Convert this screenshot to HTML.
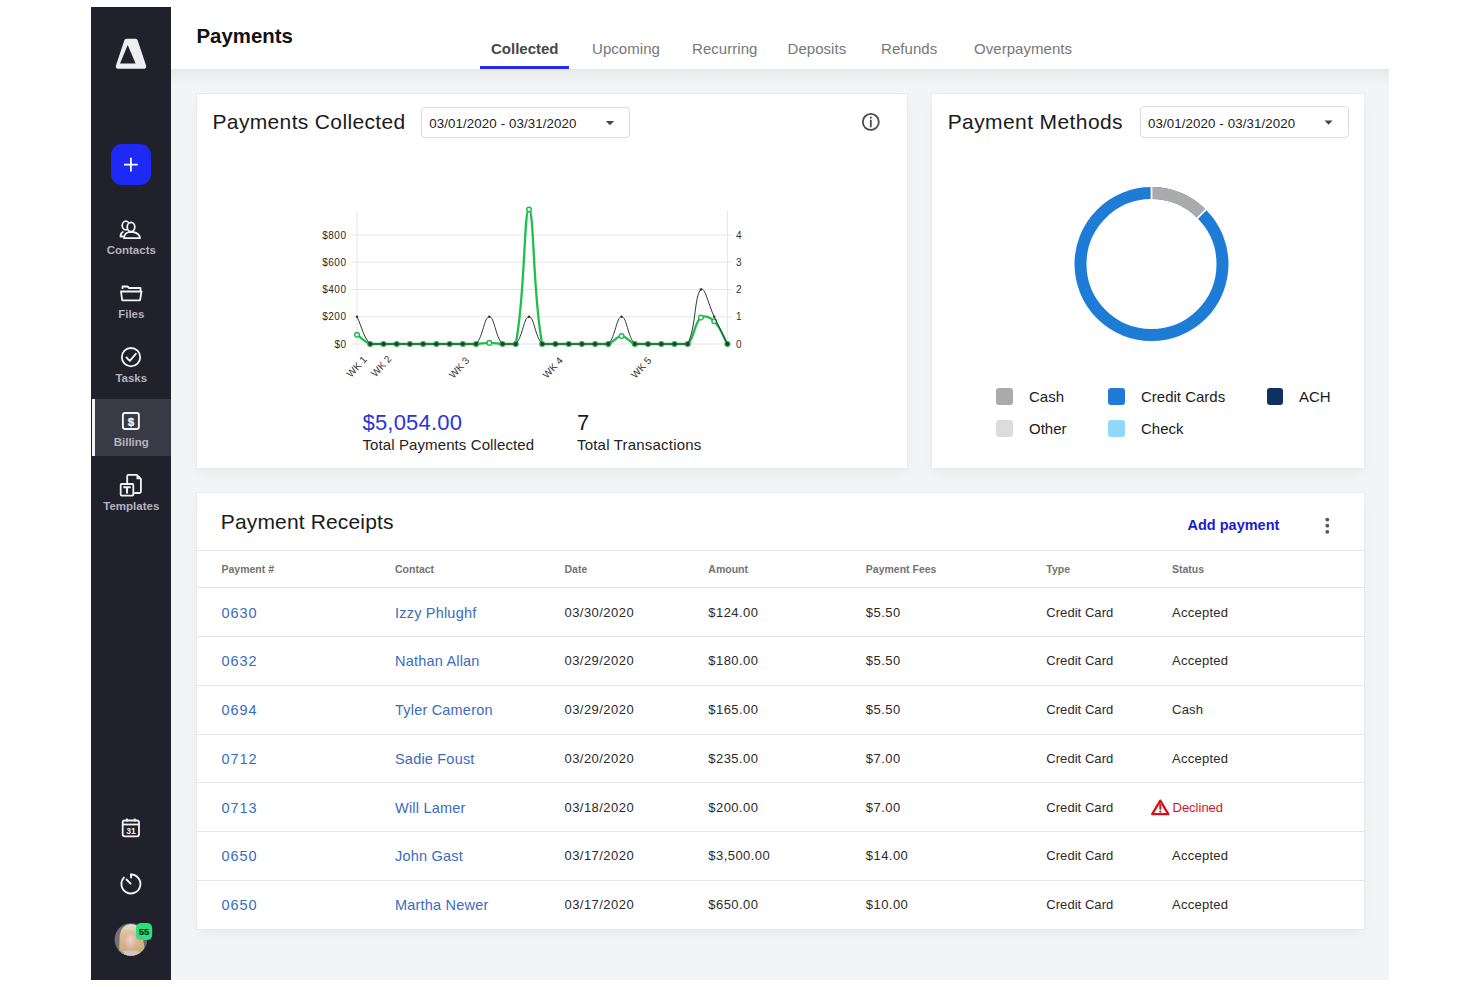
<!DOCTYPE html><html><head><meta charset="utf-8"><style>
*{margin:0;padding:0;box-sizing:border-box}
html,body{width:1480px;height:987px;overflow:hidden;background:#fff;font-family:"Liberation Sans",sans-serif}
.t{position:absolute;white-space:nowrap}
.r{position:absolute}
svg{position:absolute;left:0;top:0}
</style></head><body><div class="r" style="left:91px;top:7px;width:80px;height:973px;background:#20212b"></div>
<div class="r" style="left:171px;top:7px;width:1218px;height:62px;background:#fff"></div>
<div class="r" style="left:171px;top:69px;width:1218px;height:911px;background:#f3f4f6"></div>
<div class="r" style="left:171px;top:69px;width:1218px;height:17px;background:linear-gradient(rgba(0,0,0,0.05),rgba(0,0,0,0.025) 40%,rgba(0,0,0,0))"></div>
<div class="r" style="left:92px;top:399px;width:79px;height:57px;background:#393a45"></div>
<div class="r" style="left:92px;top:399px;width:3px;height:57px;background:#f2f2f5"></div>
<div class="r" style="left:111px;top:144px;width:40px;height:41px;background:#1f29f5;border-radius:11px"></div>
<div class="r" style="left:196px;top:93px;width:712px;height:376px;background:#fff;border:1px solid #e9eaed;box-shadow:0 5px 12px -3px rgba(0,0,0,0.06)"></div>
<div class="r" style="left:931px;top:93px;width:434px;height:376px;background:#fff;border:1px solid #e9eaed;box-shadow:0 5px 12px -3px rgba(0,0,0,0.06)"></div>
<div class="r" style="left:196px;top:492px;width:1169px;height:438px;background:#fff;border:1px solid #e9eaed;box-shadow:0 5px 12px -3px rgba(0,0,0,0.06)"></div>
<div class="r" style="left:421px;top:107px;width:209px;height:31px;border:1px solid #dcdcdc;border-radius:4px;background:#fff"></div>
<div class="r" style="left:1140px;top:106px;width:209px;height:32px;border:1px solid #dcdcdc;border-radius:4px;background:#fff"></div>
<div class="t " style="left:196.5px;top:26.23px;font-size:20.4px;line-height:20.4px;color:#111;font-weight:700;letter-spacing:0px;">Payments</div>
<div class="t " style="left:491.0px;top:41.10px;font-size:15px;line-height:15px;color:#474747;font-weight:700;letter-spacing:0px;">Collected</div>
<div class="t " style="left:592.0px;top:41.10px;font-size:15px;line-height:15px;color:#777;font-weight:400;letter-spacing:0.05px;">Upcoming</div>
<div class="t " style="left:692.0px;top:41.10px;font-size:15px;line-height:15px;color:#777;font-weight:400;letter-spacing:0.05px;">Recurring</div>
<div class="t " style="left:787.5px;top:41.10px;font-size:15px;line-height:15px;color:#777;font-weight:400;letter-spacing:0.05px;">Deposits</div>
<div class="t " style="left:881.0px;top:41.10px;font-size:15px;line-height:15px;color:#777;font-weight:400;letter-spacing:0.05px;">Refunds</div>
<div class="t " style="left:974.0px;top:41.10px;font-size:15px;line-height:15px;color:#777;font-weight:400;letter-spacing:0.05px;">Overpayments</div>
<div class="r" style="left:480px;top:66px;width:89px;height:3px;background:#2329f0"></div>
<div class="t " style="left:212.5px;top:110.92px;font-size:21px;line-height:21px;color:#1a1a1a;font-weight:400;letter-spacing:0.35px;">Payments Collected</div>
<div class="t " style="left:429.3px;top:116.84px;font-size:13.3px;line-height:13.3px;color:#222;font-weight:400;letter-spacing:0.1px;">03/01/2020 - 03/31/2020</div>
<div class="t " style="left:1148.0px;top:116.74px;font-size:13.3px;line-height:13.3px;color:#222;font-weight:400;letter-spacing:0.1px;">03/01/2020 - 03/31/2020</div>
<div class="t " style="left:947.7px;top:110.92px;font-size:21px;line-height:21px;color:#1a1a1a;font-weight:400;letter-spacing:0.4px;">Payment Methods</div>
<div class="t " style="left:362.5px;top:412.38px;font-size:22px;line-height:22px;color:#2a35d8;font-weight:400;letter-spacing:0.2px;">$5,054.00</div>
<div class="t " style="left:362.5px;top:436.80px;font-size:15px;line-height:15px;color:#222;font-weight:400;letter-spacing:0.1px;">Total Payments Collected</div>
<div class="t " style="left:577.0px;top:412.38px;font-size:22px;line-height:22px;color:#1a1a1a;font-weight:400;letter-spacing:0px;">7</div>
<div class="t " style="left:577.0px;top:436.80px;font-size:15px;line-height:15px;color:#222;font-weight:400;letter-spacing:0.2px;">Total Transactions</div>
<div class="r" style="left:996.3px;top:388px;width:16.5px;height:16.5px;background:#ababab;border-radius:3px"></div>
<div class="t " style="left:1029.0px;top:389.30px;font-size:15px;line-height:15px;color:#1a1a1a;font-weight:400;letter-spacing:0px;">Cash</div>
<div class="r" style="left:1108.3px;top:388px;width:16.5px;height:16.5px;background:#1e7bd6;border-radius:3px"></div>
<div class="t " style="left:1141.0px;top:389.30px;font-size:15px;line-height:15px;color:#1a1a1a;font-weight:400;letter-spacing:0px;">Credit Cards</div>
<div class="r" style="left:1266.7px;top:388px;width:16.5px;height:16.5px;background:#0d3161;border-radius:3px"></div>
<div class="t " style="left:1299.0px;top:389.30px;font-size:15px;line-height:15px;color:#1a1a1a;font-weight:400;letter-spacing:0px;">ACH</div>
<div class="r" style="left:996.3px;top:420px;width:16.5px;height:16.5px;background:#dcdcdc;border-radius:3px"></div>
<div class="t " style="left:1029.0px;top:421.30px;font-size:15px;line-height:15px;color:#1a1a1a;font-weight:400;letter-spacing:0px;">Other</div>
<div class="r" style="left:1108.3px;top:420px;width:16.5px;height:16.5px;background:#8fd9f7;border-radius:3px"></div>
<div class="t " style="left:1141.0px;top:421.30px;font-size:15px;line-height:15px;color:#1a1a1a;font-weight:400;letter-spacing:0px;">Check</div>
<div class="t " style="left:220.8px;top:510.82px;font-size:21px;line-height:21px;color:#1a1a1a;font-weight:400;letter-spacing:0.15px;">Payment Receipts</div>
<div class="t " style="left:1187.5px;top:518.03px;font-size:14.5px;line-height:14.5px;color:#1a1ad0;font-weight:700;letter-spacing:0px;">Add payment</div>
<div class="r" style="left:196px;top:550px;width:1169px;height:1px;background:#e6e6e6"></div>
<div class="r" style="left:196px;top:587px;width:1169px;height:1px;background:#e6e6e6"></div>
<div class="t " style="left:221.5px;top:564.21px;font-size:10.5px;line-height:10.5px;color:#737373;font-weight:700;letter-spacing:0px;">Payment #</div>
<div class="t " style="left:395.0px;top:564.21px;font-size:10.5px;line-height:10.5px;color:#737373;font-weight:700;letter-spacing:0px;">Contact</div>
<div class="t " style="left:564.5px;top:564.21px;font-size:10.5px;line-height:10.5px;color:#737373;font-weight:700;letter-spacing:0px;">Date</div>
<div class="t " style="left:708.3px;top:564.21px;font-size:10.5px;line-height:10.5px;color:#737373;font-weight:700;letter-spacing:0px;">Amount</div>
<div class="t " style="left:865.8px;top:564.21px;font-size:10.5px;line-height:10.5px;color:#737373;font-weight:700;letter-spacing:0px;">Payment Fees</div>
<div class="t " style="left:1046.3px;top:564.21px;font-size:10.5px;line-height:10.5px;color:#737373;font-weight:700;letter-spacing:0px;">Type</div>
<div class="t " style="left:1172.0px;top:564.21px;font-size:10.5px;line-height:10.5px;color:#737373;font-weight:700;letter-spacing:0px;">Status</div>
<div class="t " style="left:221.5px;top:605.53px;font-size:14.5px;line-height:14.5px;color:#3a6cc0;font-weight:400;letter-spacing:0.9px;">0630</div>
<div class="t " style="left:395.0px;top:605.53px;font-size:14.5px;line-height:14.5px;color:#3a6cc0;font-weight:400;letter-spacing:0.2px;">Izzy Phlughf</div>
<div class="t " style="left:564.5px;top:605.70px;font-size:13px;line-height:13px;color:#2a2a2a;font-weight:400;letter-spacing:0.45px;">03/30/2020</div>
<div class="t " style="left:708.3px;top:605.70px;font-size:13px;line-height:13px;color:#2a2a2a;font-weight:400;letter-spacing:0.45px;">$124.00</div>
<div class="t " style="left:865.8px;top:605.70px;font-size:13px;line-height:13px;color:#2a2a2a;font-weight:400;letter-spacing:0.45px;">$5.50</div>
<div class="t " style="left:1046.3px;top:605.70px;font-size:13px;line-height:13px;color:#2a2a2a;font-weight:400;letter-spacing:0.05px;">Credit Card</div>
<div class="t " style="left:1172.0px;top:605.70px;font-size:13px;line-height:13px;color:#2a2a2a;font-weight:400;letter-spacing:0.25px;">Accepted</div>
<div class="r" style="left:196px;top:636.0px;width:1169px;height:1px;background:#e6e6e6"></div>
<div class="t " style="left:221.5px;top:654.28px;font-size:14.5px;line-height:14.5px;color:#3a6cc0;font-weight:400;letter-spacing:0.9px;">0632</div>
<div class="t " style="left:395.0px;top:654.28px;font-size:14.5px;line-height:14.5px;color:#3a6cc0;font-weight:400;letter-spacing:0.2px;">Nathan Allan</div>
<div class="t " style="left:564.5px;top:654.45px;font-size:13px;line-height:13px;color:#2a2a2a;font-weight:400;letter-spacing:0.45px;">03/29/2020</div>
<div class="t " style="left:708.3px;top:654.45px;font-size:13px;line-height:13px;color:#2a2a2a;font-weight:400;letter-spacing:0.45px;">$180.00</div>
<div class="t " style="left:865.8px;top:654.45px;font-size:13px;line-height:13px;color:#2a2a2a;font-weight:400;letter-spacing:0.45px;">$5.50</div>
<div class="t " style="left:1046.3px;top:654.45px;font-size:13px;line-height:13px;color:#2a2a2a;font-weight:400;letter-spacing:0.05px;">Credit Card</div>
<div class="t " style="left:1172.0px;top:654.45px;font-size:13px;line-height:13px;color:#2a2a2a;font-weight:400;letter-spacing:0.25px;">Accepted</div>
<div class="r" style="left:196px;top:684.75px;width:1169px;height:1px;background:#e6e6e6"></div>
<div class="t " style="left:221.5px;top:703.03px;font-size:14.5px;line-height:14.5px;color:#3a6cc0;font-weight:400;letter-spacing:0.9px;">0694</div>
<div class="t " style="left:395.0px;top:703.03px;font-size:14.5px;line-height:14.5px;color:#3a6cc0;font-weight:400;letter-spacing:0.2px;">Tyler Cameron</div>
<div class="t " style="left:564.5px;top:703.20px;font-size:13px;line-height:13px;color:#2a2a2a;font-weight:400;letter-spacing:0.45px;">03/29/2020</div>
<div class="t " style="left:708.3px;top:703.20px;font-size:13px;line-height:13px;color:#2a2a2a;font-weight:400;letter-spacing:0.45px;">$165.00</div>
<div class="t " style="left:865.8px;top:703.20px;font-size:13px;line-height:13px;color:#2a2a2a;font-weight:400;letter-spacing:0.45px;">$5.50</div>
<div class="t " style="left:1046.3px;top:703.20px;font-size:13px;line-height:13px;color:#2a2a2a;font-weight:400;letter-spacing:0.05px;">Credit Card</div>
<div class="t " style="left:1172.0px;top:703.20px;font-size:13px;line-height:13px;color:#2a2a2a;font-weight:400;letter-spacing:0.25px;">Cash</div>
<div class="r" style="left:196px;top:733.5px;width:1169px;height:1px;background:#e6e6e6"></div>
<div class="t " style="left:221.5px;top:751.78px;font-size:14.5px;line-height:14.5px;color:#3a6cc0;font-weight:400;letter-spacing:0.9px;">0712</div>
<div class="t " style="left:395.0px;top:751.78px;font-size:14.5px;line-height:14.5px;color:#3a6cc0;font-weight:400;letter-spacing:0.2px;">Sadie Foust</div>
<div class="t " style="left:564.5px;top:751.95px;font-size:13px;line-height:13px;color:#2a2a2a;font-weight:400;letter-spacing:0.45px;">03/20/2020</div>
<div class="t " style="left:708.3px;top:751.95px;font-size:13px;line-height:13px;color:#2a2a2a;font-weight:400;letter-spacing:0.45px;">$235.00</div>
<div class="t " style="left:865.8px;top:751.95px;font-size:13px;line-height:13px;color:#2a2a2a;font-weight:400;letter-spacing:0.45px;">$7.00</div>
<div class="t " style="left:1046.3px;top:751.95px;font-size:13px;line-height:13px;color:#2a2a2a;font-weight:400;letter-spacing:0.05px;">Credit Card</div>
<div class="t " style="left:1172.0px;top:751.95px;font-size:13px;line-height:13px;color:#2a2a2a;font-weight:400;letter-spacing:0.25px;">Accepted</div>
<div class="r" style="left:196px;top:782.25px;width:1169px;height:1px;background:#e6e6e6"></div>
<div class="t " style="left:221.5px;top:800.53px;font-size:14.5px;line-height:14.5px;color:#3a6cc0;font-weight:400;letter-spacing:0.9px;">0713</div>
<div class="t " style="left:395.0px;top:800.53px;font-size:14.5px;line-height:14.5px;color:#3a6cc0;font-weight:400;letter-spacing:0.2px;">Will Lamer</div>
<div class="t " style="left:564.5px;top:800.70px;font-size:13px;line-height:13px;color:#2a2a2a;font-weight:400;letter-spacing:0.45px;">03/18/2020</div>
<div class="t " style="left:708.3px;top:800.70px;font-size:13px;line-height:13px;color:#2a2a2a;font-weight:400;letter-spacing:0.45px;">$200.00</div>
<div class="t " style="left:865.8px;top:800.70px;font-size:13px;line-height:13px;color:#2a2a2a;font-weight:400;letter-spacing:0.45px;">$7.00</div>
<div class="t " style="left:1046.3px;top:800.70px;font-size:13px;line-height:13px;color:#2a2a2a;font-weight:400;letter-spacing:0.05px;">Credit Card</div>
<div class="t " style="left:1172.5px;top:800.70px;font-size:13px;line-height:13px;color:#d4141c;font-weight:400;letter-spacing:0px;">Declined</div>
<div class="r" style="left:196px;top:831.0px;width:1169px;height:1px;background:#e6e6e6"></div>
<div class="t " style="left:221.5px;top:849.28px;font-size:14.5px;line-height:14.5px;color:#3a6cc0;font-weight:400;letter-spacing:0.9px;">0650</div>
<div class="t " style="left:395.0px;top:849.28px;font-size:14.5px;line-height:14.5px;color:#3a6cc0;font-weight:400;letter-spacing:0.2px;">John Gast</div>
<div class="t " style="left:564.5px;top:849.45px;font-size:13px;line-height:13px;color:#2a2a2a;font-weight:400;letter-spacing:0.45px;">03/17/2020</div>
<div class="t " style="left:708.3px;top:849.45px;font-size:13px;line-height:13px;color:#2a2a2a;font-weight:400;letter-spacing:0.45px;">$3,500.00</div>
<div class="t " style="left:865.8px;top:849.45px;font-size:13px;line-height:13px;color:#2a2a2a;font-weight:400;letter-spacing:0.45px;">$14.00</div>
<div class="t " style="left:1046.3px;top:849.45px;font-size:13px;line-height:13px;color:#2a2a2a;font-weight:400;letter-spacing:0.05px;">Credit Card</div>
<div class="t " style="left:1172.0px;top:849.45px;font-size:13px;line-height:13px;color:#2a2a2a;font-weight:400;letter-spacing:0.25px;">Accepted</div>
<div class="r" style="left:196px;top:879.75px;width:1169px;height:1px;background:#e6e6e6"></div>
<div class="t " style="left:221.5px;top:898.03px;font-size:14.5px;line-height:14.5px;color:#3a6cc0;font-weight:400;letter-spacing:0.9px;">0650</div>
<div class="t " style="left:395.0px;top:898.03px;font-size:14.5px;line-height:14.5px;color:#3a6cc0;font-weight:400;letter-spacing:0.2px;">Martha Newer</div>
<div class="t " style="left:564.5px;top:898.20px;font-size:13px;line-height:13px;color:#2a2a2a;font-weight:400;letter-spacing:0.45px;">03/17/2020</div>
<div class="t " style="left:708.3px;top:898.20px;font-size:13px;line-height:13px;color:#2a2a2a;font-weight:400;letter-spacing:0.45px;">$650.00</div>
<div class="t " style="left:865.8px;top:898.20px;font-size:13px;line-height:13px;color:#2a2a2a;font-weight:400;letter-spacing:0.45px;">$10.00</div>
<div class="t " style="left:1046.3px;top:898.20px;font-size:13px;line-height:13px;color:#2a2a2a;font-weight:400;letter-spacing:0.05px;">Credit Card</div>
<div class="t " style="left:1172.0px;top:898.20px;font-size:13px;line-height:13px;color:#2a2a2a;font-weight:400;letter-spacing:0.25px;">Accepted</div>
<div class="t" style="left:71.3px;width:120px;text-align:center;top:245.07px;font-size:11.5px;line-height:11.5px;color:#b4b4bc;font-weight:700;letter-spacing:0px">Contacts</div>
<div class="t" style="left:71.3px;width:120px;text-align:center;top:308.77px;font-size:11.5px;line-height:11.5px;color:#b4b4bc;font-weight:700;letter-spacing:0px">Files</div>
<div class="t" style="left:71.3px;width:120px;text-align:center;top:372.87px;font-size:11.5px;line-height:11.5px;color:#b4b4bc;font-weight:700;letter-spacing:0px">Tasks</div>
<div class="t" style="left:71.3px;width:120px;text-align:center;top:436.87px;font-size:11.5px;line-height:11.5px;color:#b4b4bc;font-weight:700;letter-spacing:0px">Billing</div>
<div class="t" style="left:71.3px;width:120px;text-align:center;top:500.67px;font-size:11.5px;line-height:11.5px;color:#b4b4bc;font-weight:700;letter-spacing:0px">Templates</div><svg width="1480" height="987" viewBox="0 0 1480 987" style="font-family:'Liberation Sans',sans-serif"><line x1="352" y1="344.0" x2="732" y2="344.0" stroke="#e6e6e6" stroke-width="1"/>
<line x1="352" y1="316.8" x2="732" y2="316.8" stroke="#e6e6e6" stroke-width="1"/>
<line x1="352" y1="289.5" x2="732" y2="289.5" stroke="#e6e6e6" stroke-width="1"/>
<line x1="352" y1="262.2" x2="732" y2="262.2" stroke="#e6e6e6" stroke-width="1"/>
<line x1="352" y1="235.0" x2="732" y2="235.0" stroke="#e6e6e6" stroke-width="1"/>
<line x1="357" y1="210.5" x2="357" y2="349" stroke="#e6e6e6" stroke-width="1"/>
<line x1="727.4" y1="210.5" x2="727.4" y2="349" stroke="#e6e6e6" stroke-width="1"/>
<path d="M357.0 334.7 C362.3 338.4 364.4 342.0 370.2 344.0 C375.0 344.0 378.2 344.0 383.5 344.0 C388.7 344.0 391.4 344.0 396.7 344.0 C402.0 344.0 404.6 344.0 409.9 344.0 C415.2 344.0 417.9 344.0 423.1 344.0 C428.4 344.0 431.1 344.0 436.4 344.0 C441.7 344.0 444.3 344.0 449.6 344.0 C454.9 344.0 457.5 344.0 462.8 344.0 C468.1 344.0 470.8 344.0 476.1 344.0 C481.4 343.8 484.0 342.9 489.3 342.9 C494.6 342.9 497.2 343.8 502.5 344.0 C507.8 344.0 514.8 344.0 515.7 344.0 C525.4 295.0 523.7 209.5 529.0 209.5 C534.3 209.5 532.6 295.0 542.2 344.0 C543.1 344.0 550.1 344.0 555.4 344.0 C560.7 344.0 563.4 344.0 568.7 344.0 C573.9 344.0 576.6 344.0 581.9 344.0 C587.2 344.0 589.8 344.0 595.1 344.0 C600.4 344.0 603.5 344.0 608.3 344.0 C614.0 342.3 616.3 336.1 621.6 336.1 C626.9 336.1 629.1 342.3 634.8 344.0 C639.7 344.0 642.7 344.0 648.0 344.0 C653.3 344.0 656.0 344.0 661.3 344.0 C666.5 344.0 669.2 344.0 674.5 344.0 C679.8 344.0 684.4 344.0 687.7 344.0 C695.0 336.7 693.7 323.8 700.9 317.6 C704.3 314.7 710.5 317.6 714.2 321.2 C721.1 328.2 722.1 334.9 727.4 344.0" fill="none" stroke="#1fbf4c" stroke-width="2.3"/>
<g fill="#fff" stroke="#1fbf4c" stroke-width="1.5"><circle cx="357.0" cy="334.7" r="2.3"/><circle cx="370.2" cy="344.0" r="2.3"/><circle cx="383.5" cy="344.0" r="2.3"/><circle cx="396.7" cy="344.0" r="2.3"/><circle cx="409.9" cy="344.0" r="2.3"/><circle cx="423.1" cy="344.0" r="2.3"/><circle cx="436.4" cy="344.0" r="2.3"/><circle cx="449.6" cy="344.0" r="2.3"/><circle cx="462.8" cy="344.0" r="2.3"/><circle cx="476.1" cy="344.0" r="2.3"/><circle cx="489.3" cy="342.9" r="2.3"/><circle cx="502.5" cy="344.0" r="2.3"/><circle cx="515.7" cy="344.0" r="2.3"/><circle cx="529.0" cy="209.5" r="2.3"/><circle cx="542.2" cy="344.0" r="2.3"/><circle cx="555.4" cy="344.0" r="2.3"/><circle cx="568.7" cy="344.0" r="2.3"/><circle cx="581.9" cy="344.0" r="2.3"/><circle cx="595.1" cy="344.0" r="2.3"/><circle cx="608.3" cy="344.0" r="2.3"/><circle cx="621.6" cy="336.1" r="2.3"/><circle cx="634.8" cy="344.0" r="2.3"/><circle cx="648.0" cy="344.0" r="2.3"/><circle cx="661.3" cy="344.0" r="2.3"/><circle cx="674.5" cy="344.0" r="2.3"/><circle cx="687.7" cy="344.0" r="2.3"/><circle cx="700.9" cy="317.6" r="2.3"/><circle cx="714.2" cy="321.2" r="2.3"/><circle cx="727.4" cy="344.0" r="2.3"/></g>
<path d="M357.0 316.8 C362.3 327.6 362.9 336.4 370.2 344.0 C373.4 344.0 378.2 344.0 383.5 344.0 C388.7 344.0 391.4 344.0 396.7 344.0 C402.0 344.0 404.6 344.0 409.9 344.0 C415.2 344.0 417.9 344.0 423.1 344.0 C428.4 344.0 431.1 344.0 436.4 344.0 C441.7 344.0 444.3 344.0 449.6 344.0 C454.9 344.0 457.5 344.0 462.8 344.0 C468.1 344.0 472.8 344.0 476.1 344.0 C483.4 336.4 484.0 316.8 489.3 316.8 C494.6 316.8 495.1 336.4 502.5 344.0 C505.7 344.0 512.5 344.0 515.7 344.0 C523.1 336.4 523.7 316.8 529.0 316.8 C534.3 316.8 534.8 336.4 542.2 344.0 C545.4 344.0 550.1 344.0 555.4 344.0 C560.7 344.0 563.4 344.0 568.7 344.0 C573.9 344.0 576.6 344.0 581.9 344.0 C587.2 344.0 589.8 344.0 595.1 344.0 C600.4 344.0 605.1 344.0 608.3 344.0 C615.7 336.4 616.3 316.8 621.6 316.8 C626.9 316.8 627.4 336.4 634.8 344.0 C638.0 344.0 642.7 344.0 648.0 344.0 C653.3 344.0 656.0 344.0 661.3 344.0 C666.5 344.0 669.2 344.0 674.5 344.0 C679.8 344.0 685.7 344.0 687.7 344.0 C696.3 326.4 694.1 296.6 700.9 289.5 C704.7 285.7 708.9 305.8 714.2 316.8 C719.5 327.6 722.1 333.1 727.4 344.0" fill="none" stroke="#333" stroke-width="1"/>
<g fill="#333"><circle cx="370.2" cy="344.0" r="2"/><circle cx="383.5" cy="344.0" r="2"/><circle cx="396.7" cy="344.0" r="2"/><circle cx="409.9" cy="344.0" r="2"/><circle cx="423.1" cy="344.0" r="2"/><circle cx="436.4" cy="344.0" r="2"/><circle cx="449.6" cy="344.0" r="2"/><circle cx="462.8" cy="344.0" r="2"/><circle cx="476.1" cy="344.0" r="2"/><circle cx="502.5" cy="344.0" r="2"/><circle cx="515.7" cy="344.0" r="2"/><circle cx="542.2" cy="344.0" r="2"/><circle cx="555.4" cy="344.0" r="2"/><circle cx="568.7" cy="344.0" r="2"/><circle cx="581.9" cy="344.0" r="2"/><circle cx="595.1" cy="344.0" r="2"/><circle cx="608.3" cy="344.0" r="2"/><circle cx="634.8" cy="344.0" r="2"/><circle cx="648.0" cy="344.0" r="2"/><circle cx="661.3" cy="344.0" r="2"/><circle cx="674.5" cy="344.0" r="2"/><circle cx="687.7" cy="344.0" r="2"/><circle cx="727.4" cy="344.0" r="2"/><circle cx="357.0" cy="316.8" r="1.2"/><circle cx="489.3" cy="316.8" r="1.2"/><circle cx="529.0" cy="316.8" r="1.2"/><circle cx="621.6" cy="316.8" r="1.2"/><circle cx="700.9" cy="289.5" r="1.2"/><circle cx="714.2" cy="316.8" r="1.2"/></g>
<text x="346.5" y="347.5" text-anchor="end" font-size="10" fill="#2a2a2a" letter-spacing="0.5">$0</text>
<text x="736" y="347.5" font-size="10" fill="#333">0</text>
<text x="346.5" y="320.2" text-anchor="end" font-size="10" fill="#2a2a2a" letter-spacing="0.5">$200</text>
<text x="736" y="320.2" font-size="10" fill="#333">1</text>
<text x="346.5" y="293.0" text-anchor="end" font-size="10" fill="#2a2a2a" letter-spacing="0.5">$400</text>
<text x="736" y="293.0" font-size="10" fill="#333">2</text>
<text x="346.5" y="265.8" text-anchor="end" font-size="10" fill="#2a2a2a" letter-spacing="0.5">$600</text>
<text x="736" y="265.8" font-size="10" fill="#333">3</text>
<text x="346.5" y="238.5" text-anchor="end" font-size="10" fill="#2a2a2a" letter-spacing="0.5">$800</text>
<text x="736" y="238.5" font-size="10" fill="#333">4</text>
<text transform="translate(367.5,360) rotate(-47.6)" text-anchor="end" font-size="10" fill="#333">WK 1</text>
<text transform="translate(392,359.5) rotate(-47.6)" text-anchor="end" font-size="10" fill="#333">WK 2</text>
<text transform="translate(470,361) rotate(-47.6)" text-anchor="end" font-size="10" fill="#333">WK 3</text>
<text transform="translate(563.5,361) rotate(-47.6)" text-anchor="end" font-size="10" fill="#333">WK 4</text>
<text transform="translate(652,361) rotate(-47.6)" text-anchor="end" font-size="10" fill="#333">WK 5</text>
<circle cx="870.8" cy="121.9" r="8" fill="none" stroke="#4a4a4a" stroke-width="1.8"/>
<line x1="870.8" y1="120.5" x2="870.8" y2="126.5" stroke="#4a4a4a" stroke-width="1.8" stroke-linecap="round"/><circle cx="870.8" cy="117.6" r="1.1" fill="#4a4a4a"/>
<path d="M605.8 121 L614.1 121 L610 125.2 Z" fill="#444"/>
<path d="M1324.5 120.5 L1332.6 120.5 L1328.5 124.7 Z" fill="#444"/>
<circle cx="1151.5" cy="264.1" r="71" fill="none" stroke="#1e7bd6" stroke-width="12"/>
<path d="M1151.50 193.10 A71 71 0 0 1 1201.70 213.90" fill="none" stroke="#ababad" stroke-width="12"/>
<line x1="1151.50" y1="200.10" x2="1151.50" y2="186.10" stroke="#fff" stroke-width="1.8"/>
<line x1="1196.75" y1="218.85" x2="1206.65" y2="208.95" stroke="#fff" stroke-width="1.8"/>
<circle cx="1327.3" cy="519.6" r="1.9" fill="#555"/>
<circle cx="1327.3" cy="525.7" r="1.9" fill="#555"/>
<circle cx="1327.3" cy="531.8" r="1.9" fill="#555"/>
<path d="M1160.3 800.6 L1168.3 814.2 L1152.2 814.2 Z" fill="none" stroke="#d4141c" stroke-width="2.3" stroke-linejoin="round"/>
<line x1="1160.3" y1="804.8" x2="1160.3" y2="808.8" stroke="#d4141c" stroke-width="2" stroke-linecap="round"/><circle cx="1160.3" cy="811.6" r="1.1" fill="#d4141c"/>
<path d="M126.5 41 L135.5 41 L144 66.5 L118 66.5 Z" fill="#eeeef2" stroke="#eeeef2" stroke-width="4.5" stroke-linejoin="round"/>
<path d="M127.7 45 L135.6 63.6 L120 63.6 Z" fill="#20212b"/>
<path d="M124 164.6 H137.7 M130.9 157.8 V171.5" stroke="#fff" stroke-width="1.8"/>
<g fill="none" stroke="#f4f4f6" stroke-width="1.8" stroke-linejoin="round"><path d="M123.5 231.5 C121 232.5 120.5 234 120.5 236.5 L123.5 236.5"/><ellipse cx="125.8" cy="225.5" rx="3.6" ry="4.3"/><path d="M124 238.2 C124 234.5 126 232.8 129 232 L133 232 C136.5 232.8 140 234.5 140 238.2 Z" fill="#20212b"/><ellipse cx="131" cy="227" rx="3.8" ry="4.6" fill="#20212b"/></g>
<g fill="none" stroke="#f4f4f6" stroke-width="1.8" stroke-linejoin="round"><path d="M122.5 289 L122.5 286.5 L127.5 286.5 L129 288 L140.5 288 L140.5 291"/><path d="M121 291.5 L141.5 291.5 L140 300.3 L122.2 300.3 Z"/></g>
<g fill="none" stroke="#f4f4f6" stroke-width="1.8"><circle cx="131" cy="357.2" r="9.2"/><path d="M126.5 357.5 L129.8 360.8 L135.8 353.8" stroke-linecap="round" stroke-linejoin="round"/></g>
<rect x="122.9" y="413" width="16" height="16" rx="2.2" fill="none" stroke="#f4f4f6" stroke-width="1.9"/>
<text x="131" y="425.6" text-anchor="middle" font-size="11.5" font-weight="700" fill="#f4f4f6" stroke="#f4f4f6" stroke-width="0.3">$</text>
<g fill="none" stroke="#f4f4f6" stroke-width="1.8" stroke-linejoin="round"><path d="M127.2 483 L127.2 476 Q127.2 474.8 128.4 474.8 L136.8 474.8 L140.9 478.9 L140.9 491.8 Q140.9 493 139.7 493 L134.2 493"/><rect x="120.7" y="484" width="12.6" height="11.6" rx="0.8"/></g>
<path d="M136.5 475 L136.5 479.3 L140.8 479.3 Z" fill="#f4f4f6"/>
<path d="M123.3 487.3 H130.7 M127 487.3 V493.6" stroke="#f4f4f6" stroke-width="2.1"/>
<g fill="none" stroke="#f4f4f6" stroke-width="1.8"><rect x="122.7" y="820.5" width="16.3" height="15.8" rx="2"/><line x1="122.7" y1="824.5" x2="139" y2="824.5"/><line x1="127" y1="818.5" x2="127" y2="821.5"/><line x1="134.7" y1="818.5" x2="134.7" y2="821.5"/></g>
<text x="130.9" y="834" text-anchor="middle" font-size="8.5" font-weight="700" fill="#f4f4f6">31</text>
<g fill="none" stroke="#f4f4f6" stroke-width="1.9" stroke-linecap="round"><path d="M131 874.5 A9.5 9.5 0 1 1 123.9 877.6"/><path d="M131 874.5 V877.5"/><path d="M126.5 879.5 L130.6 883.6"/></g>
<defs><clipPath id="av"><circle cx="130.8" cy="939.5" r="16.2"/></clipPath><radialGradient id="fc" cx="0.5" cy="0.45" r="0.55"><stop offset="0" stop-color="#f0d6c6"/><stop offset="1" stop-color="#d8ad92"/></radialGradient><linearGradient id="hr" x1="0" y1="0" x2="0" y2="1"><stop offset="0" stop-color="#e6e2dc"/><stop offset="0.25" stop-color="#d9bf98"/><stop offset="1" stop-color="#c8a272"/></linearGradient></defs>
<g clip-path="url(#av)"><rect x="114" y="923" width="34" height="34" fill="#77707a"/><rect x="142" y="936" width="6" height="14" fill="#6f6a6c"/><path d="M119 960 L119.5 938 Q120 925 131 924 Q142 925 143 938 L146 958 Z" fill="url(#hr)"/><ellipse cx="130.5" cy="940.5" rx="6.8" ry="9" fill="url(#fc)"/><path d="M116 957 Q122 950 130 950 Q139 950 146 957 Z" fill="#d6c2c0"/><path d="M114 957 L117 949 L124 953 L122 957 Z" fill="#2cb99a"/></g>
<rect x="136" y="923.1" width="16.2" height="17" rx="5" fill="#2ae07c"/>
<text x="144.1" y="934.6" text-anchor="middle" font-size="9.5" font-weight="700" fill="#0a0a0a">55</text></svg></body></html>
